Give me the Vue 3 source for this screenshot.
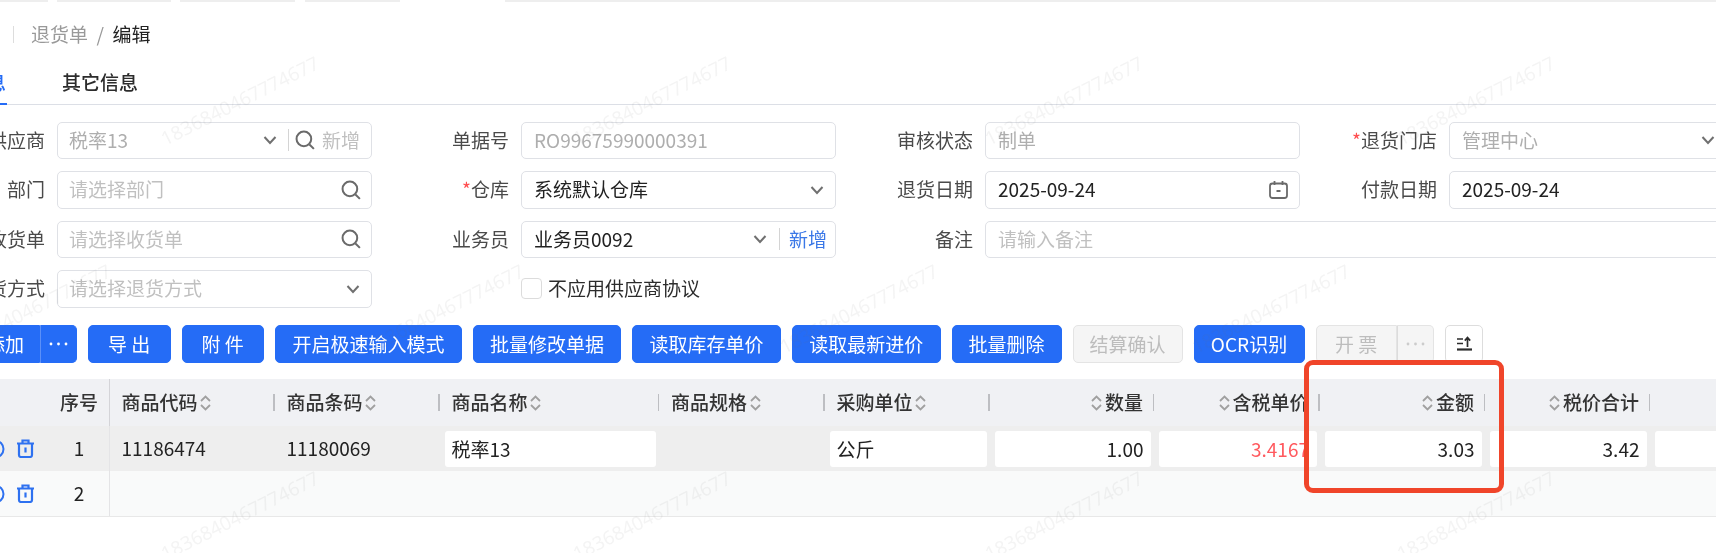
<script setup>
const strip = [
  { left: 0, width: 48 }, { left: 57, width: 114 }, { left: 180, width: 115 },
  { left: 305, width: 95 }, { left: 505, width: 1211 }
]
const marks = []
for (const y of [101, 516]) for (const x of [240, 652, 1064, 1476]) marks.push({ x, y })
for (const x of [32, 445, 859, 1271]) marks.push({ x, y: 309 })
const tools = [
  { t: '导 出', w: 82.5 }, { t: '附 件', w: 82.5 }, { t: '开启极速输入模式', w: 187 },
  { t: '批量修改单据', w: 148 }, { t: '读取库存单价', w: 149 }, { t: '读取最新进价', w: 148.5 },
  { t: '批量删除', w: 110 }, { t: '结算确认', w: 110, off: true }, { t: 'OCR识别', w: 111 }
]
const columns = [
  { t: '商品代码', w: 165 }, { t: '商品条码', w: 165 }, { t: '商品名称', w: 219.5 },
  { t: '商品规格', w: 165.5 }, { t: '采购单位', w: 165 }, { t: '数量', w: 164.5, right: true },
  { t: '含税单价', w: 165.5, right: true }, { t: '金额', w: 165.5, right: true },
  { t: '税价合计', w: 165, right: true }, { t: '', w: 165, right: true, noSort: true }
]
const cells = [
  { t: '11186474', w: 165 }, { t: '11180069', w: 165 }, { t: '税率13', w: 219.5, box: true },
  { t: '', w: 165.5 }, { t: '公斤', w: 165, box: true }, { t: '1.00', w: 164.5, box: true, right: true },
  { t: '3.4167', w: 165.5, box: true, right: true, red: true }, { t: '3.03', w: 165.5, box: true, right: true },
  { t: '3.42', w: 165, box: true, right: true }, { t: '', w: 165, box: true }
]
</script>

<template>
  <div class="page">
    <div class="strip">
      <i v-for="s in strip" :key="s.left" :style="{ left: s.left + 'px', width: s.width + 'px' }"></i>
    </div>

    <div class="crumb">
      <span class="crumb-sep"></span>
      <span class="crumb-link">退货单</span>
      <span class="crumb-slash">/</span>
      <span class="crumb-now">编辑</span>
    </div>

    <div class="tabs">
      <div class="tab active">基本信息</div>
      <div class="tab">其它信息</div>
    </div>

    <div class="form">
      <div class="field">
        <label>供应商</label>
        <div class="ctl tight">
          <span class="val muted grow">税率13</span>
          <svg class="chev" viewBox="0 0 14 10"><path d="M1.500 2 7 8l5.500-6" /></svg>
          <span class="vline v1"></span>
          <svg class="mag" viewBox="0 0 18 18"><circle cx="8" cy="8" r="6.600" /><path d="m13 13 4 4" /></svg>
          <span class="add off">新增</span>
        </div>
      </div>
      <div class="field">
        <label>单据号</label>
        <div class="ctl"><span class="val muted grow">RO99675990000391</span></div>
      </div>
      <div class="field">
        <label>审核状态</label>
        <div class="ctl"><span class="val muted grow">制单</span></div>
      </div>
      <div class="field">
        <label><b>*</b>退货门店</label>
        <div class="ctl short">
          <span class="val muted grow">管理中心</span>
          <svg class="chev" viewBox="0 0 14 10"><path d="M1.500 2 7 8l5.500-6" /></svg>
        </div>
      </div>

      <div class="field">
        <label>部门</label>
        <div class="ctl tight">
          <span class="val ph grow">请选择部门</span>
          <svg class="mag" viewBox="0 0 18 18"><circle cx="8" cy="8" r="6.600" /><path d="m13 13 4 4" /></svg>
        </div>
      </div>
      <div class="field">
        <label><b>*</b>仓库</label>
        <div class="ctl">
          <span class="val grow">系统默认仓库</span>
          <svg class="chev" viewBox="0 0 14 10"><path d="M1.500 2 7 8l5.500-6" /></svg>
        </div>
      </div>
      <div class="field">
        <label>退货日期</label>
        <div class="ctl">
          <span class="val grow">2025-09-24</span>
          <svg class="cal" viewBox="0 0 19 19">
            <rect x="1" y="3.500" width="17" height="14.500" rx="2.500" />
            <path d="M5.500 1v4M13.500 1v4M7.500 11h4" />
          </svg>
        </div>
      </div>
      <div class="field">
        <label>付款日期</label>
        <div class="ctl"><span class="val grow">2025-09-24</span></div>
      </div>

      <div class="field">
        <label>收货单</label>
        <div class="ctl tight">
          <span class="val ph grow">请选择收货单</span>
          <svg class="mag" viewBox="0 0 18 18"><circle cx="8" cy="8" r="6.600" /><path d="m13 13 4 4" /></svg>
        </div>
      </div>
      <div class="field">
        <label>业务员</label>
        <div class="ctl">
          <span class="val grow">业务员0092</span>
          <svg class="chev" viewBox="0 0 14 10"><path d="M1.500 2 7 8l5.500-6" /></svg>
          <span class="vline v2"></span>
          <span class="add">新增</span>
        </div>
      </div>
      <div class="field span2">
        <label>备注</label>
        <div class="ctl"><span class="val ph grow">请输入备注</span></div>
      </div>

      <div class="field">
        <label>退货方式</label>
        <div class="ctl tight">
          <span class="val ph grow">请选择退货方式</span>
          <svg class="chev" viewBox="0 0 14 10"><path d="M1.500 2 7 8l5.500-6" /></svg>
        </div>
      </div>
      <div class="field check">
        <label></label>
        <span class="box"></span>
        <span class="check-text">不应用供应商协议</span>
      </div>
    </div>

    <div class="toolbar">
      <div class="group">
        <button class="btn main add-main">添加</button>
        <button class="btn dots">
          <svg viewBox="0 0 19 4" width="19" height="4"><circle cx="2" cy="2" r="1.400" /><circle cx="9.500" cy="2" r="1.400" /><circle cx="17" cy="2" r="1.400" /></svg>
        </button>
      </div>
      <button
        v-for="b in tools"
        :key="b.t"
        class="btn"
        :class="{ disabled: b.off }"
        :style="{ width: b.w + 'px' }"
      >{{ b.t }}</button>
      <div class="group">
        <button class="btn disabled main bill">开 票</button>
        <button class="btn dots disabled">
          <svg viewBox="0 0 19 4" width="19" height="4"><circle cx="2" cy="2" r="1.400" /><circle cx="9.500" cy="2" r="1.400" /><circle cx="17" cy="2" r="1.400" /></svg>
        </button>
      </div>
      <button class="btn plain">
        <svg viewBox="0 0 17 15" width="17" height="15">
          <path d="M1 3h6M1 7.500h6" />
          <path d="M1 13.500h15" stroke-width="2.200" />
          <path d="M11.500 11V2M8.800 4.600 11.500 1.500l2.700 3.100" />
        </svg>
      </button>
    </div>

    <div class="table">
      <div class="tr head">
        <div class="td first"><span class="no">序号</span></div>
        <div
          v-for="c in columns"
          :key="c.t + c.w"
          class="td sep"
          :class="{ right: c.right }"
          :style="{ width: c.w + 'px' }"
        >
          <svg v-if="c.right && !c.noSort" class="sort" viewBox="0 0 11 16"><path d="M1 6l4.500-4.500L10 6M1 10l4.500 4.500L10 10" /></svg>
          <span>{{ c.t }}</span>
          <svg v-if="!c.right" class="sort" viewBox="0 0 11 16"><path d="M1 6l4.500-4.500L10 6M1 10l4.500 4.500L10 10" /></svg>
        </div>
      </div>

      <div class="tr one">
        <div class="td first">
          <svg class="ring" viewBox="0 0 20 20"><circle cx="10" cy="10" r="8.500" /></svg>
          <svg class="trash" viewBox="0 0 19 19">
            <path d="M1 4.500h17M6.500 4.500V1.500h6v3M3 4.500V16a2 2 0 0 0 2 2h9a2 2 0 0 0 2-2V4.500M9.500 8.500v5" />
          </svg>
          <span class="no light">1</span>
        </div>
        <div
          v-for="(c, i) in cells"
          :key="i"
          class="td"
          :class="{ right: c.right }"
          :style="{ width: c.w + 'px' }"
        >
          <div v-if="c.box" class="cell-box" :class="{ red: c.red }">{{ c.t }}</div>
          <span v-else>{{ c.t }}</span>
        </div>
      </div>

      <div class="tr two">
        <div class="td first">
          <svg class="ring" viewBox="0 0 20 20"><circle cx="10" cy="10" r="8.500" /></svg>
          <svg class="trash" viewBox="0 0 19 19">
            <path d="M1 4.500h17M6.500 4.500V1.500h6v3M3 4.500V16a2 2 0 0 0 2 2h9a2 2 0 0 0 2-2V4.500M9.500 8.500v5" />
          </svg>
          <span class="no light">2</span>
        </div>
      </div>
    </div>

    <span
      v-for="(m, i) in marks"
      :key="i"
      class="mark"
      :style="{ left: m.x + 'px', top: m.y + 'px' }"
    >1836840467774677</span>

    <div class="callout"></div>
  </div>
</template>

<style>
html, body { margin: 0; background: #fff; }
</style>

<style scoped>
.page {
  position: relative;
  width: 1716px;
  height: 553px;
  overflow: hidden;
  background: #fff;
  color: #333;
  font: 19px/1.3 "Noto Sans CJK SC", "Noto Sans", sans-serif;
  filter: blur(0.4px);
}

.strip { position: relative; height: 2px; }
.strip i { position: absolute; top: 0; height: 2px; background: #eeeeee; }

.crumb { display: flex; align-items: center; height: 64.500px; padding-left: 13px; box-sizing: border-box; }
.crumb-sep { width: 1px; height: 17px; margin-right: 17px; background: #dddddd; }
.crumb-link { color: #999999; }
.crumb-slash { margin: 0 8.500px; color: #999999; }
.crumb-now { color: #222222; }

.tabs {
  display: flex;
  gap: 55px;
  height: 38.500px;
  border-bottom: 1.500px solid #dcdfe6;
  box-sizing: border-box;
}
.tab { height: 30px; line-height: 30px; color: #2c2c2c; font-weight: 500; }
.tab.active {
  width: 77px;
  height: 38.500px;
  margin-left: -70px;
  box-sizing: border-box;
  color: #256cf6;
  border-bottom: 2.500px solid #256cf6;
}

.form {
  display: grid;
  grid-template-columns: repeat(4, 464px);
  row-gap: 12px;
  margin: 16.500px 0 0 -75px;
}
.field { display: flex; align-items: center; height: 37.500px; }
.field label { flex: none; width: 120px; margin-right: 12px; text-align: right; color: #4a4a4a; white-space: nowrap; }
.field label b { color: #ff4d4f; font-weight: 400; }
.span2 { grid-column: span 2; }
.ctl {
  display: flex;
  align-items: center;
  box-sizing: border-box;
  width: 315px;
  height: 37.500px;
  padding: 0 12px;
  border: 1.500px solid #dfe1e6;
  border-radius: 5px;
}
.ctl.tight { padding-left: 11px; }
.ctl.short { width: 278px; }
.span2 .ctl { width: 800px; }
.grow { flex: 1; min-width: 0; white-space: nowrap; }
.val { color: #222222; }
.muted { color: #aeaeae; }
.ph { color: #c0c0c0; }
.chev { flex: none; width: 14px; height: 10px; margin-right: -1px; fill: none; stroke: #707070; stroke-width: 2; }
.mag { flex: none; width: 20px; height: 20px; margin-right: -2px; fill: none; stroke: #6a6a6a; stroke-width: 1.800; }
.vline { flex: none; width: 1px; height: 22px; background: #d4d4d4; }
.v1 { margin: 0 6px 0 12px; }
.v2 { margin: 0 9px 0 13px; }
.add { flex: none; margin-right: -4px; color: #3b78e7; }
.add.off { margin-left: 9px; margin-right: -1px; color: #c0c0c0; }
.cal { flex: none; width: 19px; height: 19px; margin-right: -1px; fill: none; stroke: #6a6a6a; stroke-width: 1.800; }
.box { flex: none; box-sizing: border-box; width: 21px; height: 21px; margin-right: 6px; border: 1.500px solid #dcdcdc; border-radius: 4px; }
.check-text { color: #2c2c2c; }

.toolbar { display: flex; gap: 11px; height: 38.300px; margin: 17px 0 0 -30px; }
.group { display: flex; flex: none; }
.btn {
  display: flex;
  flex: none;
  align-items: center;
  justify-content: center;
  box-sizing: border-box;
  height: 38.300px;
  padding: 0;
  border: 1px solid #256cf6;
  border-radius: 5px;
  background: #256cf6;
  color: #ffffff;
  font: inherit;
  line-height: 1;
  white-space: nowrap;
}
.main { border-radius: 5px 0 0 5px; }
.add-main { width: 70px; }
.bill { width: 81.500px; }
.dots { width: 37px; border-left-color: #5c90f8; border-radius: 0 5px 5px 0; }
.dots svg { fill: currentColor; }
.btn.disabled { border: 1.500px solid #e4e4e4; background: #f5f5f5; color: #bdbdbd; }
.dots.disabled { border-left: 1px solid #dcdcdc; color: #cccccc; }
.plain {
  width: 38px;
  border: 1.500px solid #dddddd;
  background: #ffffff;
}
.plain svg { fill: none; stroke: #2c2c2c; stroke-width: 1.700; }

.table { width: 1716px; margin-top: 16.700px; border-bottom: 1px solid #e8e8e8; }
.tr { display: flex; }
.head { height: 46.700px; background: #f0f1f4; font-weight: 500; }
.one { height: 45.300px; background: #eeeeee; }
.two { height: 44.700px; background: #f9fafa; }
.td {
  position: relative;
  display: flex;
  flex: none;
  align-items: center;
  box-sizing: border-box;
  padding: 0 12px;
  white-space: nowrap;
  color: #222222;
}
.head .td { color: #333333; }
.td.right { justify-content: flex-end; padding-right: 11px; }
.first { width: 109.500px; padding: 0; border-right: 1.500px solid #e4e4e6; }
.head .first { border-right-color: #d4d4d8; }
.no { position: absolute; left: 60px; width: 38px; text-align: center; }
.sep::after {
  content: "";
  position: absolute;
  top: 15px;
  right: 0;
  width: 1.500px;
  height: 17px;
  background: #bdbec2;
}
.sort { flex: none; width: 11px; height: 16px; margin: 0 2.500px; fill: none; stroke: #a0a0a0; stroke-width: 1.800; }
.ring { position: absolute; left: -15px; width: 20px; height: 20px; fill: none; stroke: #2e71f0; stroke-width: 2; }
.trash { position: absolute; left: 15.500px; width: 19px; height: 19px; fill: none; stroke: #2e71f0; stroke-width: 2.200; }
.cell-box {
  box-sizing: border-box;
  height: 35.500px;
  line-height: 35.500px;
  margin: 0 -9px 0 -7px;
  padding: 0 7px;
  width: calc(100% + 16px);
  border-radius: 3px;
  background: #ffffff;
}
.right .cell-box { margin: 0 -8px 0 -7px; text-align: right; padding: 0 7.500px; width: calc(100% + 15px); }
.cell-box.red { color: #ff5a5f; }

.mark {
  position: absolute;
  transform: translate(-50%, -50%) rotate(-26.700deg);
  color: rgba(120, 120, 120, 0.08);
  font-family: "Noto Sans", sans-serif;
  font-size: 19px;
  white-space: nowrap;
  pointer-events: none;
}

.callout {
  position: absolute;
  left: 1303.500px;
  top: 360px;
  box-sizing: border-box;
  width: 200.500px;
  height: 132.500px;
  border: 5.200px solid #f0452a;
  border-radius: 9px;
  pointer-events: none;
}
</style>
